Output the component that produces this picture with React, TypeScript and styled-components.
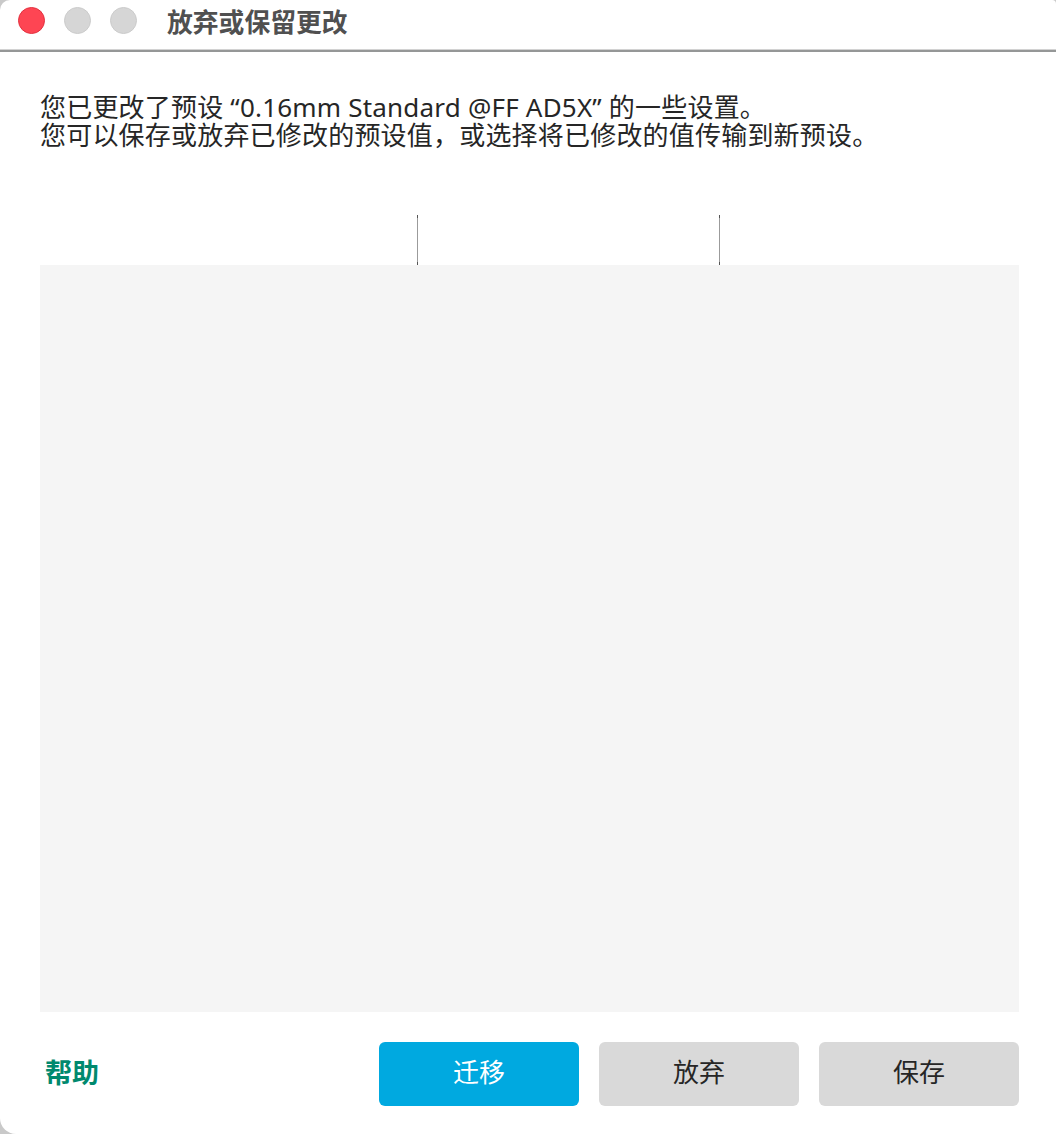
import React from "react";
import styled, { createGlobalStyle } from "styled-components";

const GlobalStyle = createGlobalStyle`
  html, body {
    margin: 0;
    padding: 0;
    background: #c9c9c9;
  }
  body {
    font-family: "Noto Sans", "Noto Sans CJK SC", sans-serif;
    color: #262626;
  }
`;

const Window = styled.div`
  display: flex;
  flex-direction: column;
  width: 1056px;
  height: 1134px;
  background: #ffffff;
  border-radius: 10px 4px 0 16px;
  overflow: hidden;
`;

const TitleBar = styled.div`
  display: flex;
  align-items: center;
  height: 50px;
  padding: 0 0 10px 18px;
  box-sizing: border-box;
  border-bottom: 1px solid #d2d2d2;
  box-shadow: 0 2px 0 #959797;
  margin-bottom: 3px;
`;

const Lights = styled.div`
  display: flex;
  gap: 19px;
  margin-top: 2px;
`;

const Light = styled.span<{ $color: string; $edge: string }>`
  display: block;
  width: 27px;
  height: 27px;
  border-radius: 50%;
  box-sizing: border-box;
  background: ${(p) => p.$color};
  border: 1px solid ${(p) => p.$edge};
`;

const Title = styled.div`
  margin-left: 30px;
  margin-top: 2px;
  font-family: "Noto Sans CJK SC", sans-serif;
  font-size: 25.8px;
  font-weight: 700;
  color: #505050;
`;

const Body = styled.div`
  display: flex;
  flex-direction: column;
  flex: 1;
  padding: 40px 37px 29px 40px;
`;

const Message = styled.div`
  display: flex;
  flex-direction: column;
  font-size: 26px;
  letter-spacing: 0.2px;
  color: #262626;
`;

const MessageLine = styled.div`
  height: 28px;
  line-height: 28px;
  white-space: nowrap;
`;

const HeaderRow = styled.div`
  display: flex;
  height: 50px;
  margin-top: 66px;
`;

const HeaderCell = styled.div<{ $width: number }>`
  width: ${(p) => p.$width}px;
  display: flex;
  justify-content: flex-end;
`;

const Splitter = styled.span`
  display: block;
  width: 1px;
  height: 50px;
  background: linear-gradient(
    #555 0 3px,
    #9b9b9b 3px calc(100% - 3px),
    #555 calc(100% - 3px)
  );
`;

const Panel = styled.div`
  height: 747px;
  background: #f5f5f5;
`;

const Footer = styled.div`
  display: flex;
  align-items: center;
  margin-top: 30px;
  gap: 20px;
`;

const HelpLink = styled.a`
  margin-left: 5px;
  margin-right: auto;
  margin-top: -6px;
  font-family: "Noto Sans CJK SC", sans-serif;
  font-size: 27px;
  font-weight: 700;
  color: #00896e;
  text-decoration: none;
  cursor: pointer;
`;

const Button = styled.button<{ $primary?: boolean }>`
  width: 200px;
  height: 64px;
  padding: 0 0 7px;
  border: none;
  border-radius: 6px;
  font-family: "Noto Sans CJK SC", sans-serif;
  font-size: 26px;
  color: ${(p) => (p.$primary ? "#ffffff" : "#262626")};
  background: ${(p) => (p.$primary ? "#00a9e0" : "#d9d9d9")};
  cursor: pointer;
`;

export default function App() {
  return (
    <>
      <GlobalStyle />
      <Window>
        <TitleBar>
          <Lights>
            <Light $color="#fe4553" $edge="#e2313f" />
            <Light $color="#d6d6d6" $edge="#cbcbcb" />
            <Light $color="#d6d6d6" $edge="#cbcbcb" />
          </Lights>
          <Title>放弃或保留更改</Title>
        </TitleBar>
        <Body>
          <Message>
            <MessageLine>
              您已更改了预设 “0.16mm Standard @FF AD5X” 的一些设置。
            </MessageLine>
            <MessageLine>
              您可以保存或放弃已修改的预设值，或选择将已修改的值传输到新预设。
            </MessageLine>
          </Message>
          <HeaderRow>
            <HeaderCell $width={378}>
              <Splitter />
            </HeaderCell>
            <HeaderCell $width={302}>
              <Splitter />
            </HeaderCell>
          </HeaderRow>
          <Panel />
          <Footer>
            <HelpLink>帮助</HelpLink>
            <Button $primary>迁移</Button>
            <Button>放弃</Button>
            <Button>保存</Button>
          </Footer>
        </Body>
      </Window>
    </>
  );
}
